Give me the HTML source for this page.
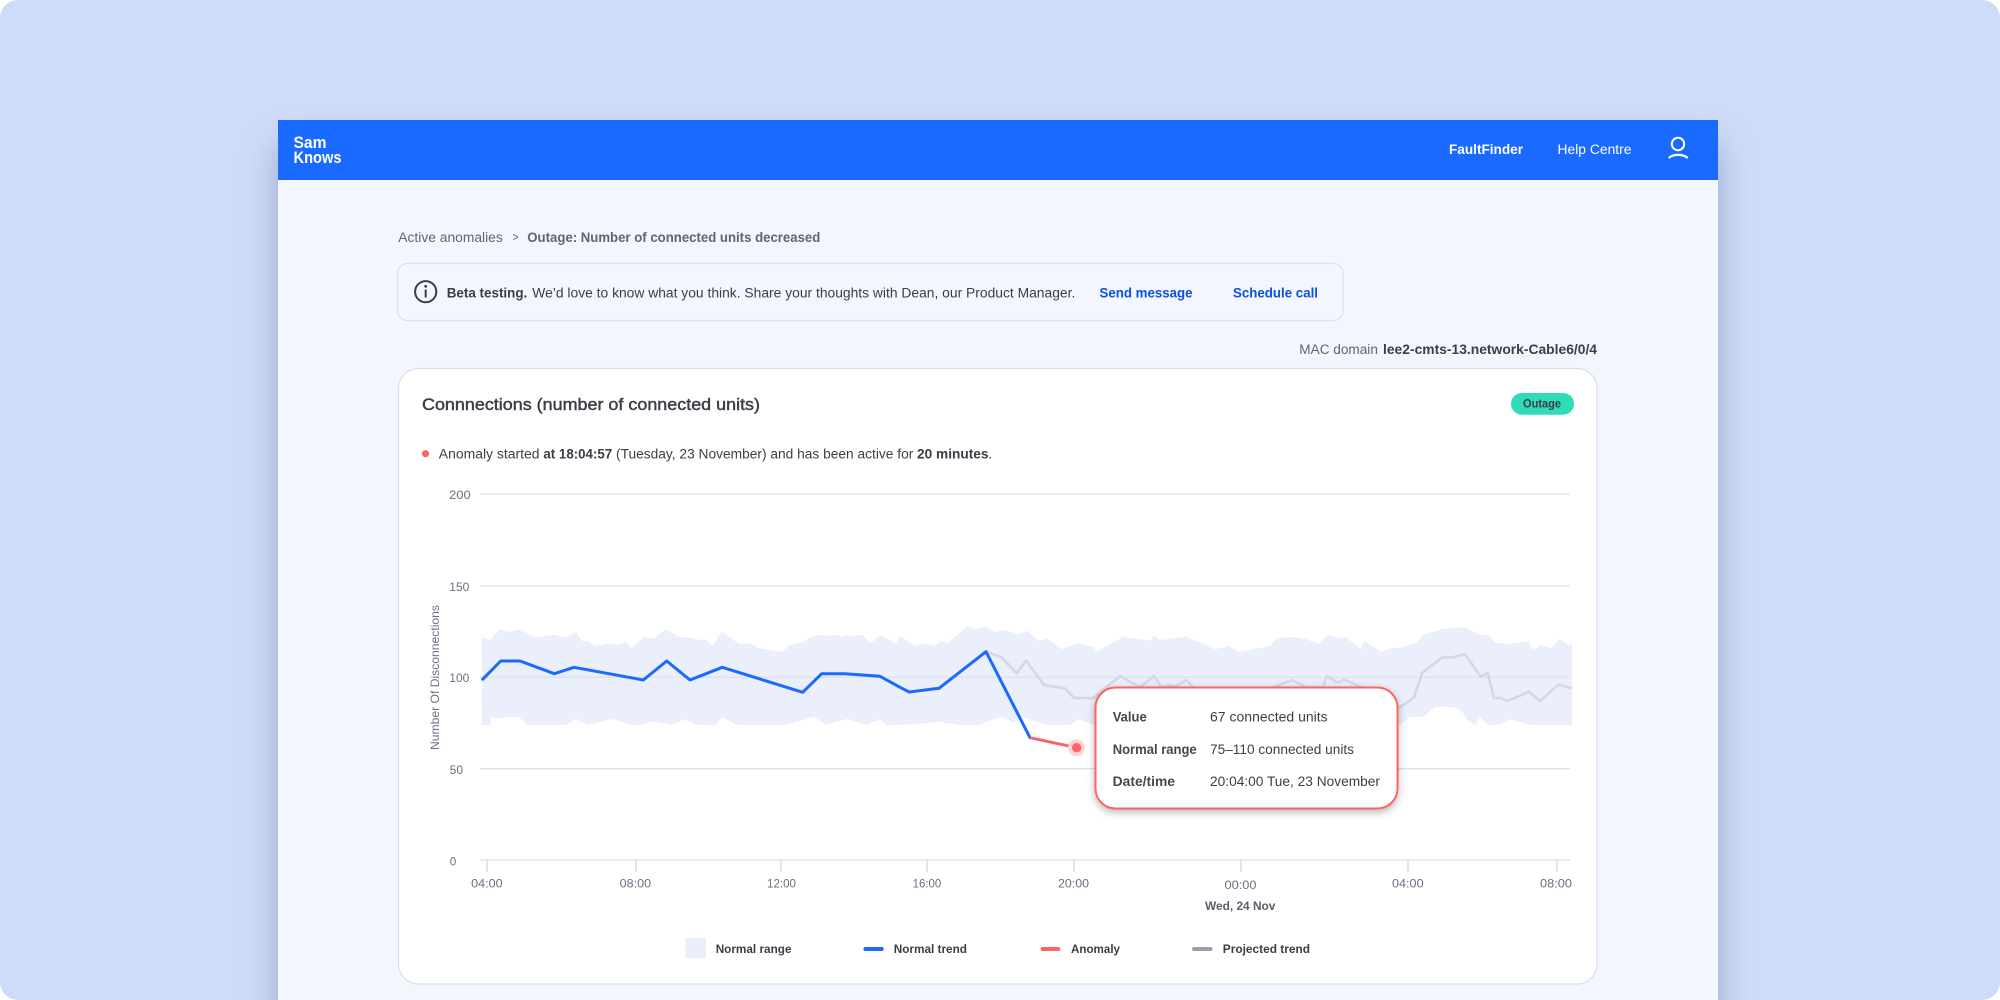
<!DOCTYPE html>
<html lang="en">
<head>
<meta charset="utf-8">
<title>FaultFinder</title>
<style>
html,body{margin:0;padding:0;width:2000px;height:1000px;overflow:hidden;background:#fff}
#bg{position:absolute;left:0;top:0;width:2000px;height:1000px;background:#cfdcf9;border-radius:18px;overflow:hidden}
#win{position:absolute;left:278px;top:120px;width:1440px;height:900px;background:#f3f6fc;box-shadow:0 24px 32px rgba(50,70,120,.34)}
#hdr{position:absolute;left:0;top:0;width:1440px;height:60px;background:#1a6aff}
svg{position:absolute;left:0;top:0}
text{font-family:"Liberation Sans",sans-serif;font-size:13.5px;fill:#3c3e47}
.g{fill:#5f6373}
.b{font-weight:700}
.m{stroke:#3c3e47;stroke-width:.45px}
.ax{fill:#6b6f80;font-size:12px}
.w{fill:#fff}
.l{fill:#0b50e6;font-weight:700}
.lg{font-size:12px;font-weight:700}
</style>
</head>
<body>
<div id="bg"><div id="win"><div id="hdr"></div></div></div>
<svg width="2000" height="1000" viewBox="0 0 2000 1000" xmlns="http://www.w3.org/2000/svg">
<!-- header -->
<text x="293.5" y="148" class="w b" style="font-size:16.5px" textLength="33" lengthAdjust="spacingAndGlyphs">Sam</text>
<text x="293.5" y="163" class="w b" style="font-size:16.5px" textLength="48" lengthAdjust="spacingAndGlyphs">Knows</text>
<text x="1449" y="154" class="w b" textLength="74" lengthAdjust="spacingAndGlyphs">FaultFinder</text>
<text x="1557.5" y="154" class="w" textLength="74" lengthAdjust="spacingAndGlyphs">Help Centre</text>
<circle cx="1678" cy="144" r="6.2" fill="none" stroke="#fff" stroke-width="2"/>
<path d="M1669.5 157.5C1673 154 1683 154 1687 157.5" fill="none" stroke="#fff" stroke-width="2.2" stroke-linecap="round"/>
<!-- breadcrumb -->
<text x="398.3" y="242" class="g" textLength="104.5" lengthAdjust="spacingAndGlyphs">Active anomalies</text>
<text x="512.5" y="241" class="g" style="font-size:12px" textLength="6" lengthAdjust="spacingAndGlyphs">&gt;</text>
<text x="527.3" y="242" class="g b" textLength="293" lengthAdjust="spacingAndGlyphs">Outage: Number of connected units decreased</text>
<!-- beta box -->
<rect x="397.5" y="263.5" width="945.5" height="57" rx="10" fill="#f3f6fc" stroke="#dde1ef" stroke-width="1.2"/>
<circle cx="425.7" cy="291.7" r="10.6" fill="none" stroke="#3c3e47" stroke-width="2"/>
<circle cx="425.7" cy="286.3" r="1.4" fill="#3c3e47"/>
<rect x="424.7" y="289.5" width="2" height="8" fill="#3c3e47"/>
<text x="446.7" y="297.5" class="b" textLength="80.6" lengthAdjust="spacingAndGlyphs">Beta testing.</text>
<text x="532.3" y="297.5" textLength="543" lengthAdjust="spacingAndGlyphs">We’d love to know what you think. Share your thoughts with Dean, our Product Manager.</text>
<text x="1099.5" y="297.5" class="l" textLength="93" lengthAdjust="spacingAndGlyphs">Send message</text>
<text x="1233" y="297.5" class="l" textLength="85" lengthAdjust="spacingAndGlyphs">Schedule call</text>
<!-- MAC -->
<text x="1299.3" y="354" class="g" textLength="78.6" lengthAdjust="spacingAndGlyphs">MAC domain</text>
<text x="1383" y="354" class="b" textLength="214" lengthAdjust="spacingAndGlyphs">lee2-cmts-13.network-Cable6/0/4</text>
<!-- card -->
<rect x="398.5" y="368.5" width="1198.5" height="615.5" rx="20" fill="#fff" stroke="#d9deee" stroke-width="1.2"/>
<text x="422" y="410" class="m" style="font-size:16.5px" textLength="338" lengthAdjust="spacingAndGlyphs">Connnections (number of connected units)</text>
<rect x="1511" y="393" width="63" height="21.7" rx="10.8" fill="#2edcb7"/>
<text x="1523" y="407.5" class="b" style="font-size:11.5px" textLength="38" lengthAdjust="spacingAndGlyphs">Outage</text>
<circle cx="425.5" cy="453.7" r="3.6" fill="#ff6464"/>
<text x="438.8" y="458.5" textLength="100.7" lengthAdjust="spacingAndGlyphs">Anomaly started</text>
<text x="543.4" y="458.5" class="b" textLength="68.8" lengthAdjust="spacingAndGlyphs">at 18:04:57</text>
<text x="616" y="458.5" textLength="297.3" lengthAdjust="spacingAndGlyphs">(Tuesday, 23 November) and has been active for</text>
<text x="917" y="458.5" class="b" textLength="71.5" lengthAdjust="spacingAndGlyphs">20 minutes</text>
<text x="988.5" y="458.5">.</text>
<!-- band -->
<polygon fill="#ebeffb" points="482,637.3 490.7,640 499.3,629.3 510,631.7 519.3,629.3 535,637.3 554,634.7 565.7,637.3 575.7,631.7 581.7,640.7 587.7,641 595.3,646.3 610.7,643.3 618.3,644.7 625,641.3 631.7,648 643.3,637.3 654,638.7 665.7,629.3 679.3,637.3 690,637.3 698.3,640 705,639.3 712.7,646 721.7,631.7 739.3,644 750,643.3 758.3,648 781.7,652 790.7,644.7 803.3,642 810,637.3 821.7,634.7 830,636 836.7,634.7 844,637.3 844,635 854,636 862.7,634.7 870.7,643.3 880.7,634.7 896,644 900,636 915,646 922.7,643.3 935,646 940.7,640.7 946.7,643.3 968.3,626 975,629.3 986,626 995,631.7 1006.7,630 1016.7,635 1026.7,630.7 1038.3,640.7 1046.7,638.3 1061.7,649.3 1076.7,643.3 1093.3,646.7 1096.7,651.7 1123.3,636.7 1150,640.7 1154,635 1160,640 1166.7,639.3 1186.7,636.7 1215,649.3 1228.3,646 1238.3,651.7 1270,646 1277.3,638.3 1293.3,636.7 1300,638.3 1306.7,639.3 1318.3,644 1328.3,634.7 1340.7,638.3 1346,637.3 1360.7,649.3 1364,640.7 1381.7,651.7 1390.7,648.3 1400,647.7 1415.7,643.3 1423.3,634.7 1443.3,628.7 1465,627.3 1480,635 1488.3,635 1495,642.7 1509,644 1529,641.3 1532.7,650 1540.7,645 1550.7,648 1559.3,638.7 1570,646 1572,640.7 1572,725 1531.7,725 1509,719.3 1500,725 1488.3,725 1480,717.3 1474.3,725 1466.7,719.3 1463.3,713.3 1455,707 1435,707 1423.3,716.7 1410,716.7 1400,725 1093.3,725 1078.3,719.3 1070,725 1046.7,725 1023.3,717.3 1013.3,722.7 1001.7,716.7 988.3,721 980,725 960,725 940,722 900,725 886,725 880,719 867.3,725 846.7,719 826,725 814.3,716.7 786,725 736.7,725 721.7,716.7 716,725 696.7,725 685,719 672.7,725 650,721.3 643.3,725 631.7,725 612.7,719 587.7,725 575.7,719 565.7,725 526.7,725 519.3,717 508.3,717 499.3,718.7 490.7,716.7 490.7,725 482,725"/>
<!-- grid -->
<g stroke="#dde2f0" stroke-width="1.3">
<line x1="480" y1="494" x2="1570" y2="494"/>
<line x1="480" y1="586" x2="1570" y2="586"/>
<line x1="480" y1="677.3" x2="1570" y2="677.3"/>
<line x1="480" y1="768.7" x2="1570" y2="768.7"/>
</g>
<line x1="480" y1="860" x2="1570" y2="860" stroke="#e6eaf3" stroke-width="2"/>
<g stroke="#d5dbea" stroke-width="1.5">
<line x1="487" y1="860" x2="487" y2="872"/><line x1="636" y1="860" x2="636" y2="872"/><line x1="781" y1="860" x2="781" y2="872"/><line x1="927" y1="860" x2="927" y2="872"/><line x1="1074" y1="860" x2="1074" y2="872"/><line x1="1241" y1="860" x2="1241" y2="872"/><line x1="1408" y1="860" x2="1408" y2="872"/><line x1="1557" y1="860" x2="1557" y2="872"/>
</g>
<!-- axis labels -->
<text x="449" y="499" class="ax" textLength="21.7" lengthAdjust="spacingAndGlyphs">200</text>
<text x="449.3" y="591" class="ax" textLength="20" lengthAdjust="spacingAndGlyphs">150</text>
<text x="449.3" y="682" class="ax" textLength="20" lengthAdjust="spacingAndGlyphs">100</text>
<text x="449.7" y="774" class="ax" textLength="13.5" lengthAdjust="spacingAndGlyphs">50</text>
<text x="449.7" y="865.5" class="ax" textLength="6.5" lengthAdjust="spacingAndGlyphs">0</text>
<text transform="translate(439 750) rotate(-90)" class="ax" textLength="145" lengthAdjust="spacingAndGlyphs">Number Of Disconnections</text>
<text x="471.2" y="887.7" class="ax" textLength="31.4" lengthAdjust="spacingAndGlyphs">04:00</text>
<text x="619.7" y="887.7" class="ax" textLength="31.4" lengthAdjust="spacingAndGlyphs">08:00</text>
<text x="767" y="887.7" class="ax" textLength="29" lengthAdjust="spacingAndGlyphs">12:00</text>
<text x="912.6" y="887.7" class="ax" textLength="28.6" lengthAdjust="spacingAndGlyphs">16:00</text>
<text x="1058" y="887.7" class="ax" textLength="31" lengthAdjust="spacingAndGlyphs">20:00</text>
<text x="1224.5" y="889" class="ax" textLength="32" lengthAdjust="spacingAndGlyphs">00:00</text>
<text x="1392" y="887.7" class="ax" textLength="31.6" lengthAdjust="spacingAndGlyphs">04:00</text>
<text x="1540" y="887.7" class="ax" textLength="32" lengthAdjust="spacingAndGlyphs">08:00</text>
<text x="1205" y="910" class="b" style="font-size:12px;fill:#5a5e6e" textLength="70.4" lengthAdjust="spacingAndGlyphs">Wed, 24 Nov</text>
<!-- projected -->
<polyline fill="none" stroke="#d5d8e2" stroke-width="2.6" stroke-linejoin="round" points="986,651.7 1001.7,657.3 1016.7,673.3 1026,660.7 1044,685 1065,688.3 1074,698 1093.3,698 1120,676 1140,687.3 1154,676 1161.7,687.3 1170,685 1175,686.7 1186.7,680 1193,687.3 1215,700 1250,700 1273,687.3 1291.7,680 1306.7,687.3 1323,687 1326.7,676 1338,682.7 1344,679.3 1361.7,687.3 1380,700 1400,707.3 1414,697.3 1422.3,672.7 1442.3,657.3 1453.3,657.3 1465,654 1480.7,676.7 1487.7,672.7 1494,698 1500.7,698 1507.3,701 1529,691.7 1540,701 1558.3,684.7 1572,688.3"/>
<!-- normal trend -->
<polyline fill="none" stroke="#1a6aff" stroke-width="3" stroke-linejoin="round" stroke-linecap="round" points="482.7,679.3 500.7,661 520,661 554.3,673.7 574,667.3 643.3,680 666.7,661 690,680 722.3,667.3 802.7,692.3 821.7,673.7 845,673.7 880,676.3 900,687.3 909.3,692 939,688.3 986,651.7 1030,737.7"/>
<line x1="1030" y1="737.7" x2="1076.7" y2="747.7" stroke="#ff6464" stroke-width="3"/>
<circle cx="1076.7" cy="747.7" r="8.5" fill="#ffd3d3"/>
<circle cx="1076.7" cy="747.7" r="4.7" fill="#ff6464"/>
<!-- tooltip -->
<rect x="1095.5" y="687.5" width="302" height="121" rx="20" fill="#fff" stroke="#ff6464" stroke-width="2" style="filter:drop-shadow(0 3px 4px rgba(0,0,0,.28))"/>
<text x="1112.7" y="721.7" class="b" style="fill:#45474f" textLength="34" lengthAdjust="spacingAndGlyphs">Value</text>
<text x="1112.7" y="754" class="b" style="fill:#45474f" textLength="84" lengthAdjust="spacingAndGlyphs">Normal range</text>
<text x="1112.7" y="786" class="b" style="fill:#45474f" textLength="62.3" lengthAdjust="spacingAndGlyphs">Date/time</text>
<text x="1210" y="721.7" textLength="117.7" lengthAdjust="spacingAndGlyphs">67 connected units</text>
<text x="1210" y="754" textLength="144" lengthAdjust="spacingAndGlyphs">75–110 connected units</text>
<text x="1210" y="786" textLength="170" lengthAdjust="spacingAndGlyphs">20:04:00 Tue, 23 November</text>
<!-- legend -->
<rect x="685.5" y="938" width="20.5" height="20" fill="#ebeffb"/>
<text x="715.7" y="953" class="lg" textLength="75.8" lengthAdjust="spacingAndGlyphs">Normal range</text>
<rect x="863.4" y="947" width="20.3" height="4" rx="2" fill="#1a6aff"/>
<text x="893.7" y="953" class="lg" textLength="73.3" lengthAdjust="spacingAndGlyphs">Normal trend</text>
<rect x="1040.6" y="947" width="19.7" height="4" rx="2" fill="#ff6464"/>
<text x="1071" y="953" class="lg" textLength="49" lengthAdjust="spacingAndGlyphs">Anomaly</text>
<rect x="1192" y="947" width="20.5" height="4" rx="2" fill="#9a9fb0"/>
<text x="1222.8" y="953" class="lg" textLength="87.2" lengthAdjust="spacingAndGlyphs">Projected trend</text>
</svg>
</body>
</html>
